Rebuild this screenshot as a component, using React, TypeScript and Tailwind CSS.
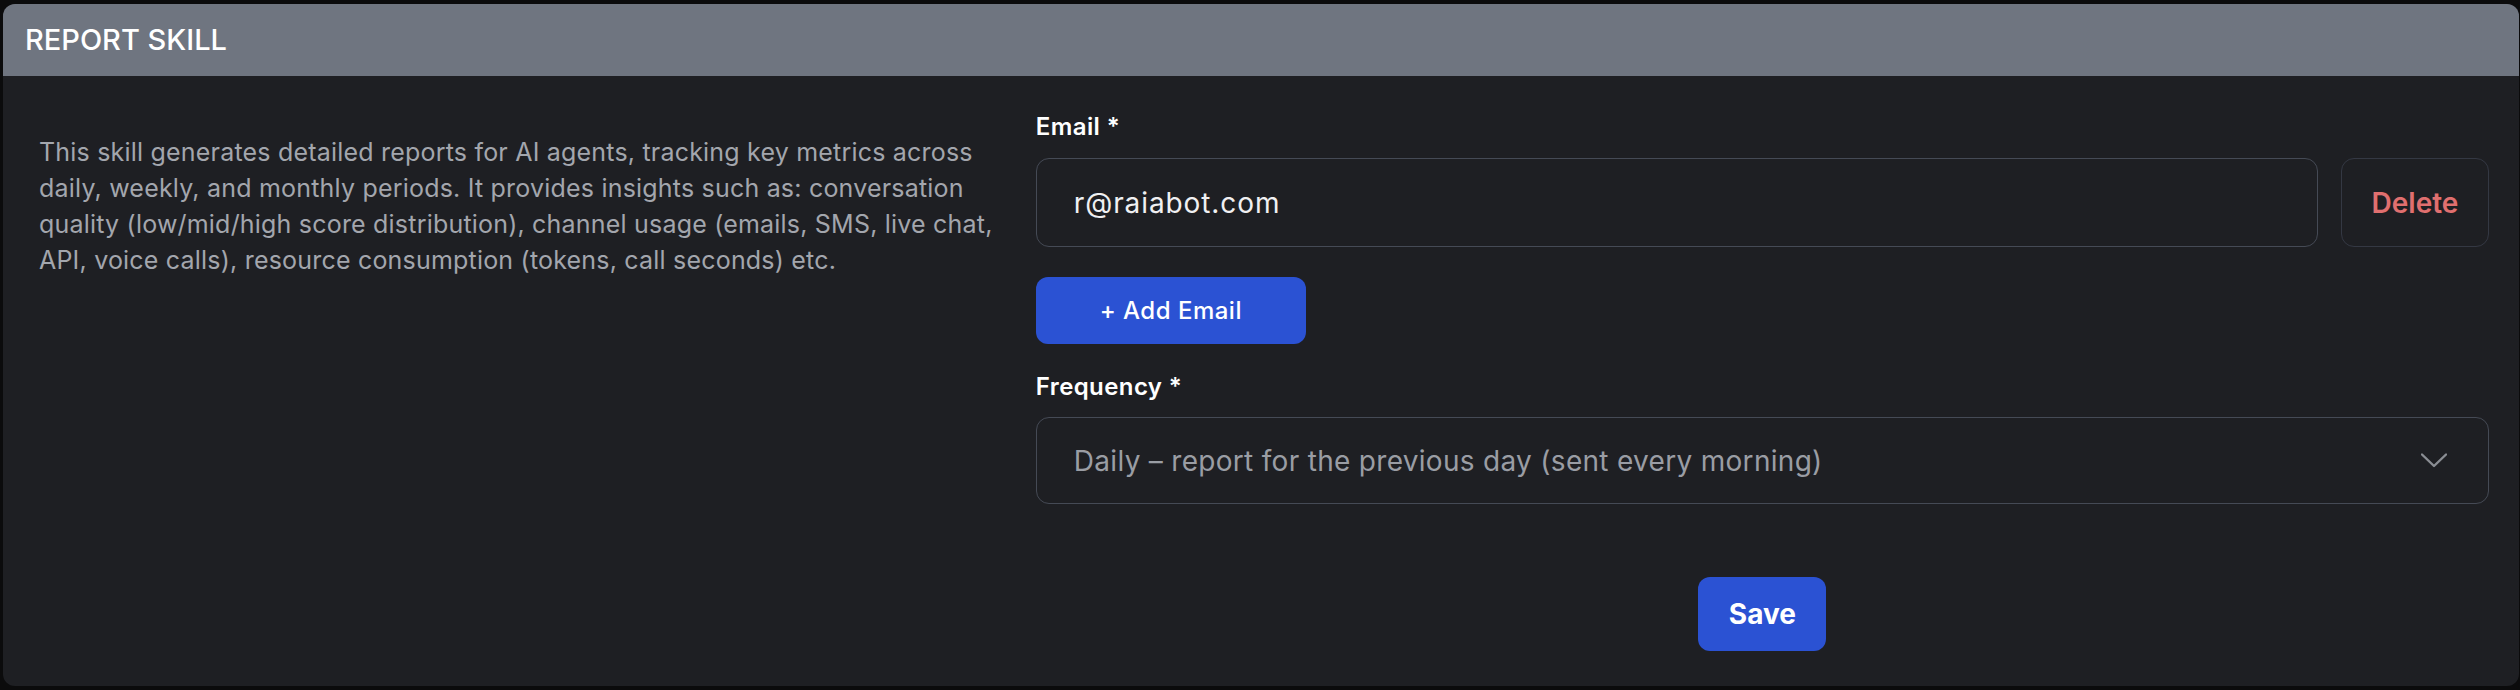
import React from 'react';

const description =
  'This skill generates detailed reports for AI agents, tracking key metrics across daily, weekly, and monthly periods. It provides insights such as: conversation quality (low/mid/high score distribution), channel usage (emails, SMS, live chat, API, voice calls), resource consumption (tokens, call seconds) etc.';

const EmailRow: React.FC<{ email: string }> = ({ email }) => {
  return (
    <div className='flex flex-row gap-[23px]'>
      <div className='flex-1 h-[89px] rounded-[13px] border border-[#454a55] flex items-center pl-[37px] text-[28px] tracking-[0.9px] text-[#f0f0f2]'>
        {email}
      </div>
      <div className='w-[148px] h-[89px] rounded-[13px] border border-[#343843] flex items-center justify-center text-[28px] font-semibold text-[#e06f6f]'>
        Delete
      </div>
    </div>
  );
};

export default function App() {
  return (
    <div className='h-[690px] w-[2520px] bg-[#0b0b0c] pt-[4px] pl-[3px] overflow-hidden' style={{ fontFamily: 'Inter, "Noto Sans", sans-serif' }}>
      <div className='w-[2516px] h-[682px] rounded-[12px] overflow-hidden bg-[#1e1f23] flex flex-col'>
        <div className='h-[72px] bg-[#6f7580] flex items-center pl-[22px] text-[29px] font-medium text-white'>
          REPORT SKILL
        </div>
        <div className='grid grid-cols-[2fr_3fr] gap-x-[28px] pl-[36px] pr-[30px] pt-[33px]'>
          <div className='pt-[25px] text-[25px] leading-[36px] tracking-[0.2px] text-[#a3a6ad]'>
            {description}
          </div>
          <div className='flex flex-col'>
            <div className='text-[24px] leading-[36px] tracking-[0.4px] font-semibold text-white'>Email *</div>
            <div className='mt-[13px]'>
              <EmailRow email='r@raiabot.com' />
            </div>
            <div className='mt-[30px] w-[270px] h-[67px] rounded-[12px] bg-[#2b52d3] flex items-center justify-center text-[24px] tracking-[0.5px] font-medium text-white'>
              + Add Email
            </div>
            <div className='mt-[25px] text-[24px] leading-[36px] tracking-[0.4px] font-semibold text-white'>Frequency *</div>
            <div className='mt-[12px] h-[87px] rounded-[13px] border border-[#454a55] flex flex-row items-center justify-between pl-[37px] pr-[41px]'>
              <span className='text-[28px] tracking-[0.3px] text-[#9a9da4]'>Daily – report for the previous day (sent every morning)</span>
              <svg width='26' height='15' viewBox='0 0 26 15' fill='none' className='text-[#8a8d93]'>
                <polyline points='1,1.5 13,13 25,1.5' stroke='currentColor' strokeWidth='2.4' strokeLinecap='round' strokeLinejoin='round' />
              </svg>
            </div>
            <div className='mt-[73px] flex justify-center'>
              <div className='w-[128px] h-[74px] rounded-[12px] bg-[#2b52d3] flex items-center justify-center text-[28px] font-bold text-white'>
                Save
              </div>
            </div>
          </div>
        </div>
      </div>
    </div>
  );
}
